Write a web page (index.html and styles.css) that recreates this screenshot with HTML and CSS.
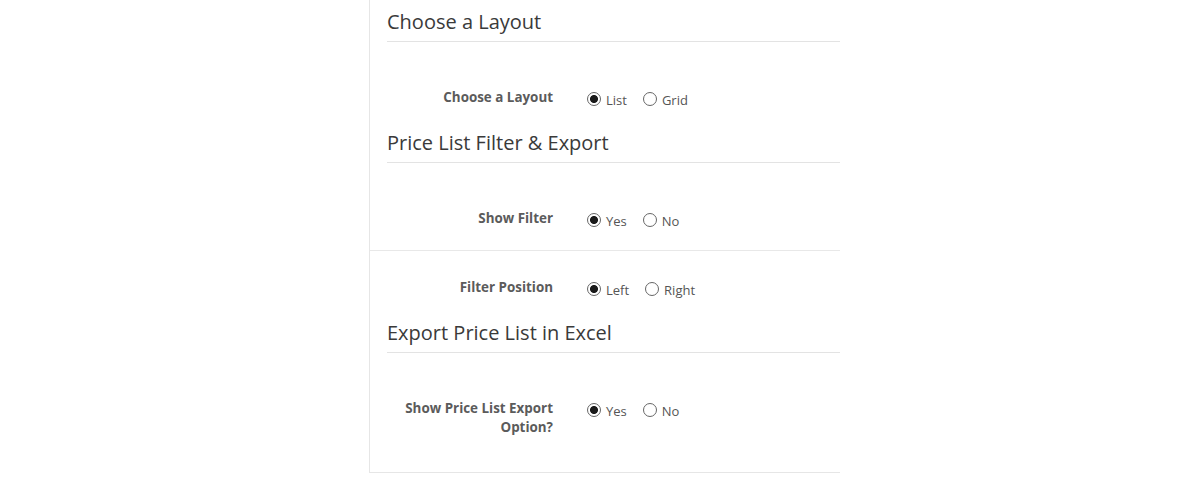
FILE: index.html
```html
<!DOCTYPE html>
<html>
<head>
<meta charset="utf-8">
<link rel="stylesheet" href="styles.css">
</head>
<body>
<div class="panel">
  <section class="section">
    <h2 class="section-title">Choose a Layout</h2>
    <div class="section-body">
      <div class="row">
        <div class="label">Choose a Layout</div>
        <div class="options">
          <label class="opt"><input type="radio" name="layout" checked><span>List</span></label>
          <label class="opt"><input type="radio" name="layout"><span>Grid</span></label>
        </div>
      </div>
    </div>
  </section>
  <section class="section">
    <h2 class="section-title">Price List Filter &amp; Export</h2>
    <div class="section-body">
      <div class="row">
        <div class="label">Show Filter</div>
        <div class="options">
          <label class="opt"><input type="radio" name="filter" checked><span>Yes</span></label>
          <label class="opt"><input type="radio" name="filter"><span>No</span></label>
        </div>
      </div>
      <div class="row row-sep">
        <div class="label">Filter Position</div>
        <div class="options">
          <label class="opt"><input type="radio" name="pos" checked><span>Left</span></label>
          <label class="opt"><input type="radio" name="pos"><span>Right</span></label>
        </div>
      </div>
    </div>
  </section>
  <section class="section">
    <h2 class="section-title">Export Price List in Excel</h2>
    <div class="section-body">
      <div class="row">
        <div class="label">Show Price List Export Option?</div>
        <div class="options">
          <label class="opt"><input type="radio" name="export" checked><span>Yes</span></label>
          <label class="opt"><input type="radio" name="export"><span>No</span></label>
        </div>
      </div>
    </div>
  </section>
</div>
</body>
</html>
```
FILE: styles.css
```css
html, body {
  margin: 0;
  padding: 0;
  background: #ffffff;
}

body {
  font-family: "Open Sans", "Liberation Sans", sans-serif;
  color: #555555;
}

.panel {
  margin-left: 369px;
  width: 471px;
  border-left: 1px solid #e6e6e6;
  border-bottom: 1px solid #e6e6e6;
  box-sizing: border-box;
  padding-top: 8px;
  padding-bottom: 14px;
}

.section-title {
  margin: 0 0 0 17px;
  padding: 0 0 6px;
  font-size: 20px;
  line-height: 27px;
  font-weight: 400;
  color: #3a3a3a;
  border-bottom: 1px solid #e3e3e3;
}

.section-body {
  padding-top: 19px;
}

.row {
  display: flex;
  align-items: flex-start;
  padding: 27px 0 21px;
}

.row-sep {
  border-top: 1px solid #e8e8e8;
}

.label {
  width: 166px;
  margin-left: 17px;
  text-align: right;
  font-size: 13.4px;
  line-height: 19px;
  font-weight: 700;
  color: #5b5b5b;
}

.options {
  display: flex;
  gap: 16px;
  margin-left: 34px;
}

.opt {
  display: flex;
  align-items: flex-start;
  font-size: 13px;
  color: #555555;
}

.opt input {
  appearance: none;
  -webkit-appearance: none;
  margin: 4px 5px 0 0;
  width: 14px;
  height: 14px;
  border: 1px solid #666666;
  border-radius: 50%;
  box-sizing: border-box;
  background: #ffffff;
}

.opt input:checked {
  background: radial-gradient(circle, #1a1a1a 0 3.6px, #ffffff 4.4px);
}

.opt span {
  line-height: 15px;
  padding-top: 5px;
}
```
